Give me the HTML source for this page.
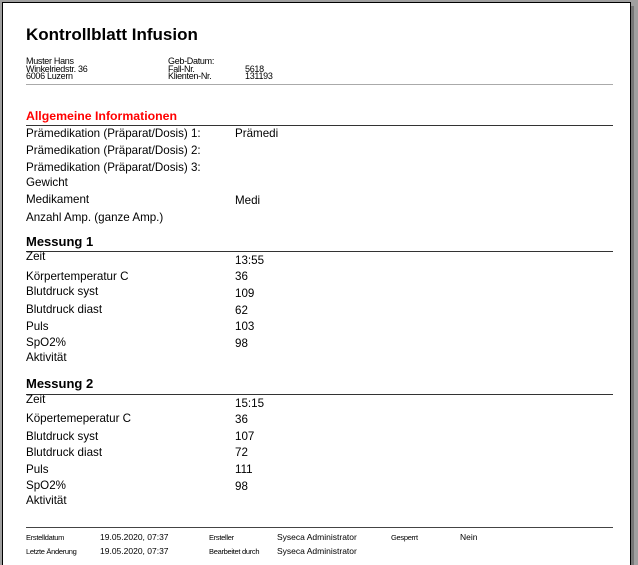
<!DOCTYPE html>
<html style="overflow:hidden;width:638px;height:565px"><head><meta charset="utf-8"><style>
body{margin:0;width:638px;height:565px;background:#a0a0a0;position:relative;overflow:hidden;font-family:"Liberation Sans",Arial,sans-serif;color:#000}
.pg{position:absolute;left:2px;top:2px;width:627px;height:570px;background:#fff;border:1px solid #000}
.sh{position:absolute;left:631px;top:6px;width:3px;height:570px;background:#777}
.t{position:absolute;font-size:11.6px;line-height:13px;white-space:nowrap}
.s{position:absolute;font-size:9px;line-height:9px;white-space:nowrap;letter-spacing:-0.3px}
.f{position:absolute;font-size:7.5px;line-height:9px;white-space:nowrap;letter-spacing:-0.3px}
.fv{position:absolute;font-size:8.5px;line-height:9px;white-space:nowrap}
.h{position:absolute;font-size:13px;font-weight:bold;line-height:15px;white-space:nowrap}
.l{position:absolute;left:26px;width:587px;height:1px;background:#333}
</style></head><body>
<div class="sh"></div>
<div class="pg"></div>
<div class="h" style="left:26px;top:25px;font-size:17px;line-height:20px">Kontrollblatt Infusion</div>
<div class="s" style="left:26px;top:57px">Muster Hans</div>
<div class="s" style="left:26px;top:65px">Winkelriedstr. 36</div>
<div class="s" style="left:26px;top:72px">6006 Luzern</div>
<div class="s" style="left:168px;top:57px">Geb-Datum:</div>
<div class="s" style="left:168px;top:65px">Fall-Nr.</div>
<div class="s" style="left:168px;top:72px">Klienten-Nr.</div>
<div class="s" style="left:245px;top:65px">5618</div>
<div class="s" style="left:245px;top:72px">131193</div>
<div class="l" style="top:84px;background:#aaa"></div>
<div class="h" style="left:26px;top:109px;color:#f00;font-size:12.3px">Allgemeine Informationen</div>
<div class="l" style="top:125px"></div>
<div class="t" style="left:26px;top:127px">Prämedikation (Präparat/Dosis) 1:</div><div class="t" style="left:235px;top:127px">Prämedi</div>
<div class="t" style="left:26px;top:144px">Prämedikation (Präparat/Dosis) 2:</div>
<div class="t" style="left:26px;top:161px">Prämedikation (Präparat/Dosis) 3:</div>
<div class="t" style="left:26px;top:176px">Gewicht</div>
<div class="t" style="left:26px;top:193px">Medikament</div><div class="t" style="left:235px;top:194px">Medi</div>
<div class="t" style="left:26px;top:211px">Anzahl Amp. (ganze Amp.)</div>
<div class="h" style="left:26px;top:234px">Messung 1</div>
<div class="l" style="top:251px"></div>
<div class="t" style="left:26px;top:250px">Zeit</div><div class="t" style="left:235px;top:254px">13:55</div>
<div class="t" style="left:26px;top:270px">Körpertemperatur C</div><div class="t" style="left:235px;top:270px">36</div>
<div class="t" style="left:26px;top:285px">Blutdruck syst</div><div class="t" style="left:235px;top:287px">109</div>
<div class="t" style="left:26px;top:303px">Blutdruck diast</div><div class="t" style="left:235px;top:304px">62</div>
<div class="t" style="left:26px;top:320px">Puls</div><div class="t" style="left:235px;top:320px">103</div>
<div class="t" style="left:26px;top:336px">SpO2%</div><div class="t" style="left:235px;top:337px">98</div>
<div class="t" style="left:26px;top:351px">Aktivität</div>
<div class="h" style="left:26px;top:376px">Messung 2</div>
<div class="l" style="top:394px"></div>
<div class="t" style="left:26px;top:393px">Zeit</div><div class="t" style="left:235px;top:397px">15:15</div>
<div class="t" style="left:26px;top:412px">Köpertemeperatur C</div><div class="t" style="left:235px;top:413px">36</div>
<div class="t" style="left:26px;top:430px">Blutdruck syst</div><div class="t" style="left:235px;top:430px">107</div>
<div class="t" style="left:26px;top:446px">Blutdruck diast</div><div class="t" style="left:235px;top:446px">72</div>
<div class="t" style="left:26px;top:463px">Puls</div><div class="t" style="left:235px;top:463px">111</div>
<div class="t" style="left:26px;top:479px">SpO2%</div><div class="t" style="left:235px;top:480px">98</div>
<div class="t" style="left:26px;top:494px">Aktivität</div>
<div class="l" style="top:527px;height:1px;background:#444"></div>
<div class="f" style="left:26px;top:533px">Erstelldatum</div>
<div class="fv" style="left:100px;top:533px">19.05.2020, 07:37</div>
<div class="f" style="left:209px;top:533px">Ersteller</div>
<div class="fv" style="left:277px;top:533px">Syseca Administrator</div>
<div class="f" style="left:391px;top:533px">Gesperrt</div>
<div class="fv" style="left:460px;top:533px">Nein</div>
<div class="f" style="left:26px;top:547px">Letzte Änderung</div>
<div class="fv" style="left:100px;top:547px">19.05.2020, 07:37</div>
<div class="f" style="left:209px;top:547px">Bearbeitet durch</div>
<div class="fv" style="left:277px;top:547px">Syseca Administrator</div>
</body></html>
